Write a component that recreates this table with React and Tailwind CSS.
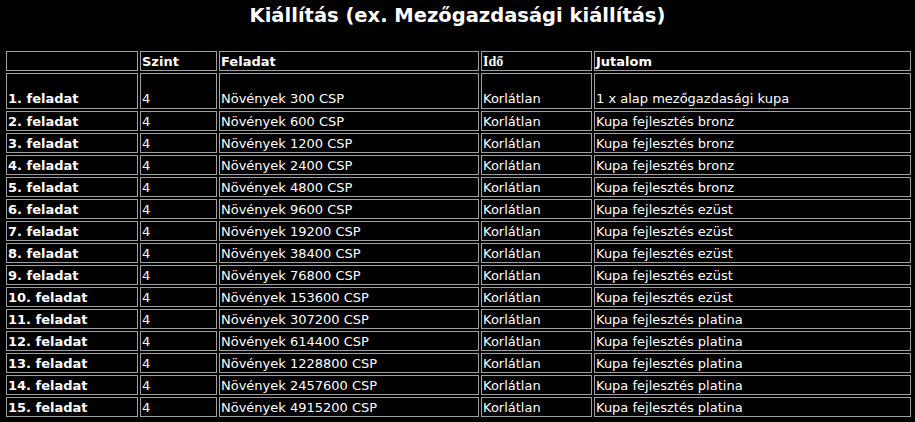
import React from "react";

const rewards = [
  "1 x alap mezőgazdasági kupa",
  "Kupa fejlesztés bronz",
  "Kupa fejlesztés bronz",
  "Kupa fejlesztés bronz",
  "Kupa fejlesztés bronz",
  "Kupa fejlesztés ezüst",
  "Kupa fejlesztés ezüst",
  "Kupa fejlesztés ezüst",
  "Kupa fejlesztés ezüst",
  "Kupa fejlesztés ezüst",
  "Kupa fejlesztés platina",
  "Kupa fejlesztés platina",
  "Kupa fejlesztés platina",
  "Kupa fejlesztés platina",
  "Kupa fejlesztés platina",
];

const rows = rewards.map((r, i) => ({
  name: `${i + 1}. feladat`,
  level: "4",
  task: `Növények ${300 * Math.pow(2, i)} CSP`,
  time: "Korlátlan",
  reward: r,
}));

const cell = "border border-[#a0a0a0] px-[1px] leading-[16px] flex items-end";

export default function App() {
  return (
    <div
      className="min-h-[422px] bg-black text-white pl-[6px]"
      style={{ fontFamily: '"DejaVu Sans", Verdana, sans-serif' }}
    >
      <h1 className="text-center text-[19.5px] font-bold leading-[24px] pt-[4px] h-[51px] pr-[6px]">
        Kiállítás (ex. Mezőgazdasági kiállítás)
      </h1>
      <div className="grid grid-cols-[132px_77px_260px_111px_317px] gap-[2px] text-[13px]">
        <div className={`${cell} h-[20px]`}></div>
        <div className={`${cell} h-[20px] font-bold`}>Szint</div>
        <div className={`${cell} h-[20px] font-bold`}>Feladat</div>
        <div className={`${cell} h-[20px] font-bold`}>
          <span style={{ fontFamily: '"Liberation Serif", serif' }} className="text-[14px]">Idő</span>
        </div>
        <div className={`${cell} h-[20px] font-bold`}>Jutalom</div>
        {rows.map((r, i) => {
          const h = i === 0 ? "h-[36px] pb-[1px]" : "h-[20px]";
          return (
            <React.Fragment key={i}>
              <div className={`${cell} ${h} font-bold`}>{r.name}</div>
              <div className={`${cell} ${h}`}>{r.level}</div>
              <div className={`${cell} ${h}`}>{r.task}</div>
              <div className={`${cell} ${h}`}>{r.time}</div>
              <div className={`${cell} ${h}`}>{r.reward}</div>
            </React.Fragment>
          );
        })}
      </div>
    </div>
  );
}
